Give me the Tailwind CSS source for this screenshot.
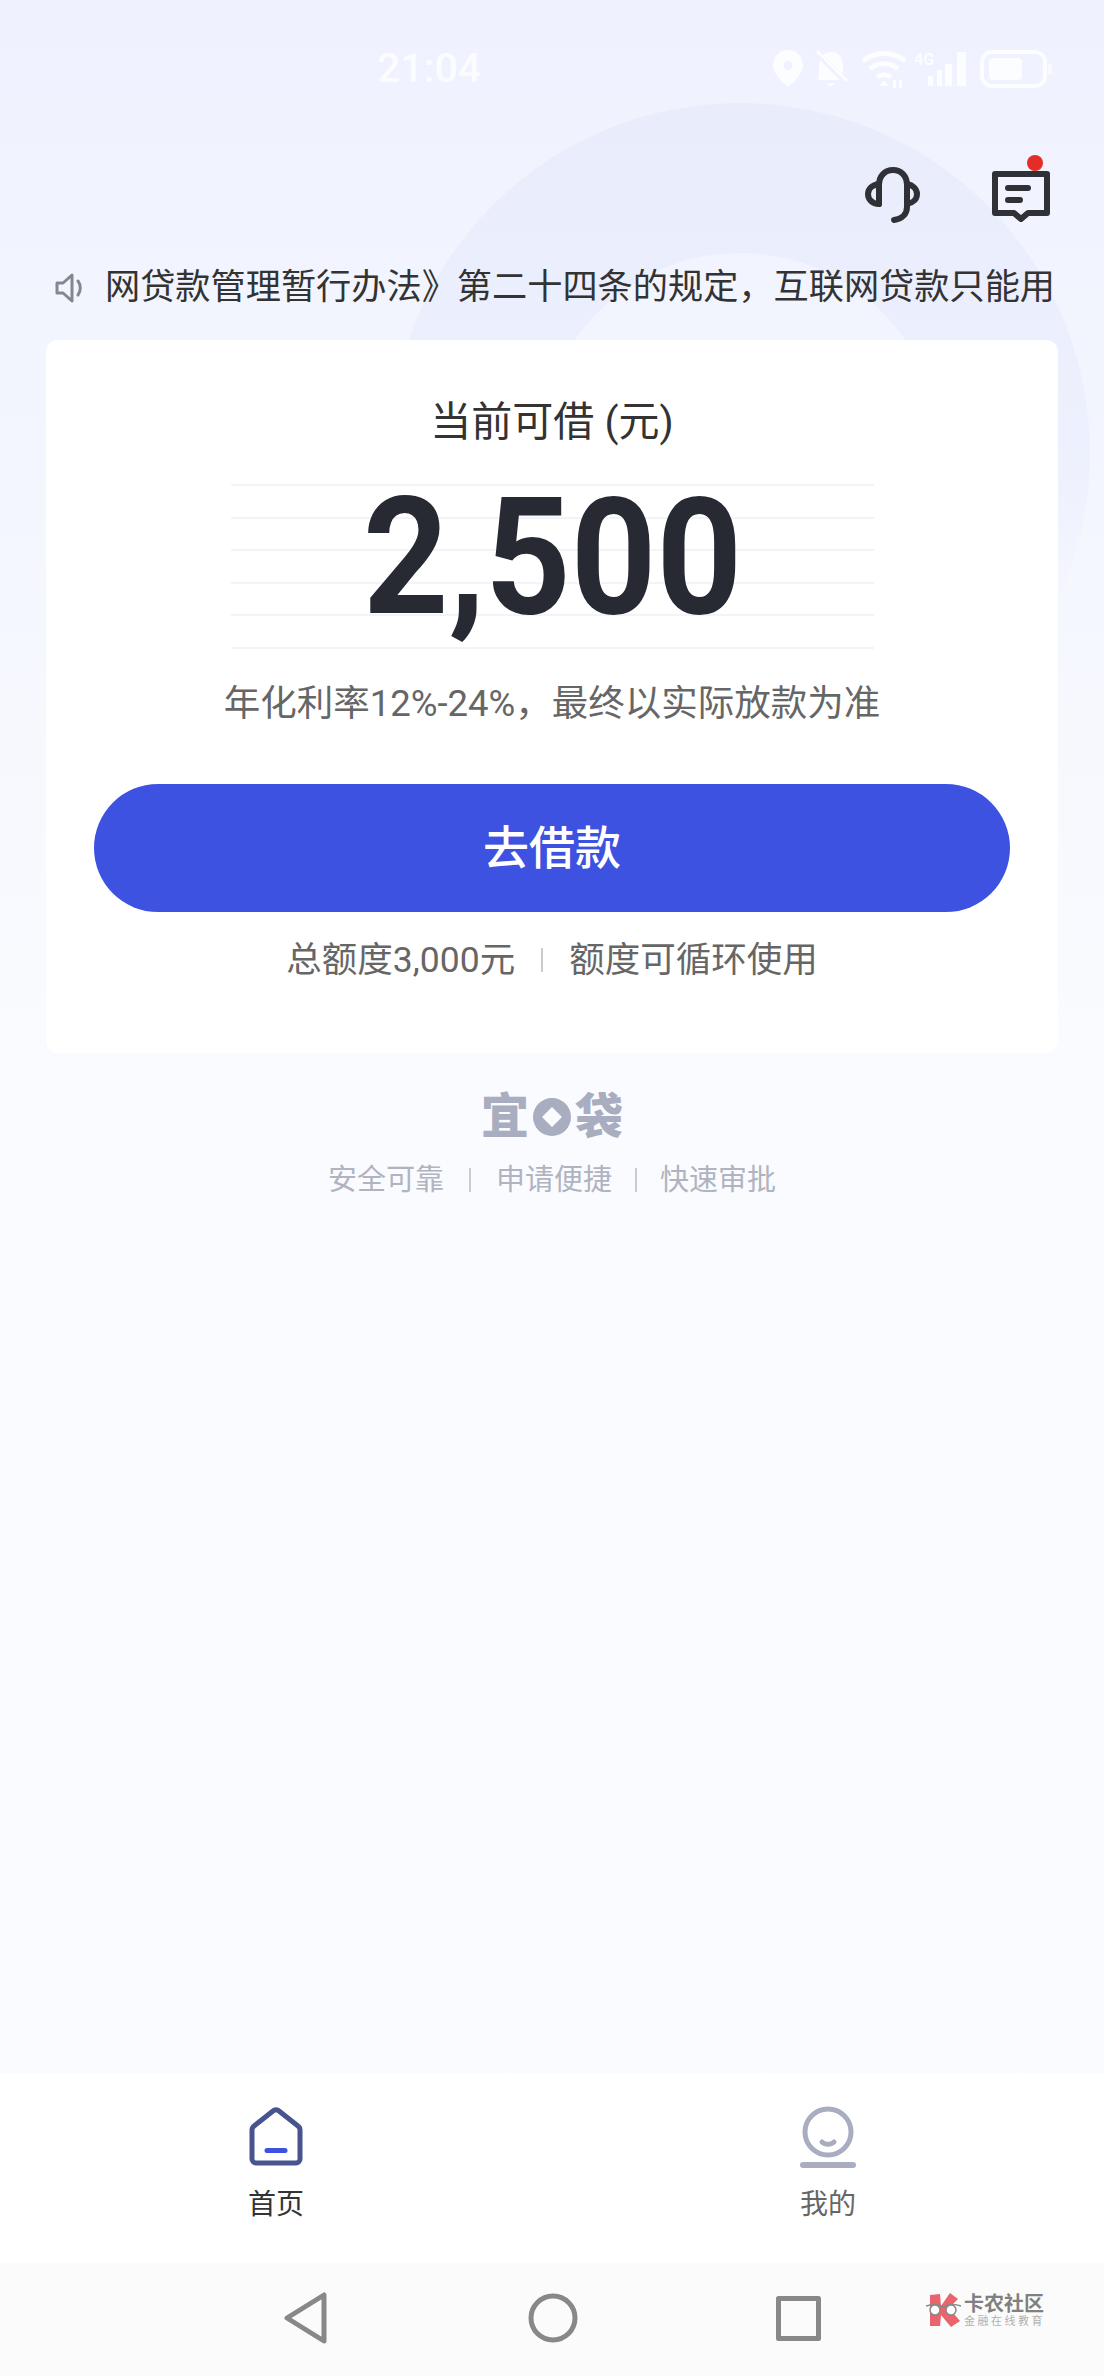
<!DOCTYPE html>
<html lang="zh-CN">
<head>
<meta charset="utf-8">
<title>首页</title>
<script src="https://cdn.jsdelivr.net/npm/@tailwindcss/browser@4"></script>
</head>
<body class="font-['Roboto','Noto_Sans_CJK_SC',sans-serif]">
<div class="relative w-[1104px] h-[2376px] overflow-hidden flex flex-col bg-gradient-to-b from-[#eff2fe] to-[#fafbff] to-[45%]">

  <!-- background ring -->
  <svg class="absolute left-[390px] top-[103px]" width="700" height="700" viewBox="0 0 700 700" fill="none">
    <defs>
      <linearGradient id="ring" x1="0" y1="0" x2="0" y2="700" gradientUnits="userSpaceOnUse">
        <stop offset="0" stop-color="#e9ecfb"/>
        <stop offset=".5" stop-color="#edf0fd"/>
        <stop offset=".78" stop-color="#f1f3fe" stop-opacity="0"/>
      </linearGradient>
    </defs>
    <circle cx="350" cy="350" r="275" stroke="url(#ring)" stroke-width="150"/>
  </svg>

  <!-- status bar -->
  <div class="relative flex items-center h-[130px] pt-[6px] pl-[377px] pr-[52px] text-white">
    <span class="text-[41px] leading-none font-medium opacity-80">21:04</span>
    <svg class="ml-auto" width="279" height="40" viewBox="0 0 279 40" fill="#ffffff" opacity=".85">
      <path fill-rule="evenodd" d="M15 2a15 15 0 0 1 15 15c0 9-9 17-15 22C9 34 0 26 0 17A15 15 0 0 1 15 2zm0 11a4.500 4.500 0 1 0 0 9 4.500 4.500 0 0 0 0-9z"/>
      <path d="M58 4c8 0 12 6 12 14v9l4 5H46l-1-1 1-4V18c0-8 4-14 12-14zM53 35h10l-5 4z"/>
      <path d="M42 3l33 33" stroke="#eff2fe" stroke-width="6"/>
      <path d="M44 3l30 30" stroke="#ffffff" stroke-width="3"/>
      <g fill="none" stroke="#ffffff" stroke-width="5">
        <path d="M90 13c12-10 30-10 42 0"/>
        <path d="M97 21c8-7 20-7 28 0"/>
        <path d="M104 29c4-3 10-3 14 0"/>
      </g>
      <path d="M111 32l5 6h-10zM120 32h3v8h-3zM126 32h3v8h-3z"/>
      <text x="141" y="17" font-size="16" font-weight="700" font-family="Roboto, sans-serif">4G</text>
      <rect x="155" y="28" width="5" height="10"/><rect x="164" y="22" width="5" height="16"/><rect x="172" y="16" width="7" height="22"/><rect x="184" y="4" width="9" height="34"/>
      <rect x="209" y="4" width="63" height="34" rx="10" fill="none" stroke="#ffffff" stroke-width="4"/>
      <rect x="216" y="10" width="33" height="22" rx="4"/>
      <rect x="275" y="15" width="4" height="12" rx="2" opacity=".7"/>
    </svg>
  </div>

  <!-- top actions -->
  <div class="relative flex justify-end items-start gap-[72px] pr-[54px] h-[128px] pt-[37px]">
    <svg width="55" height="56" viewBox="0 0 55 56" fill="none" stroke="#2f3136" stroke-width="6" stroke-linecap="round">
      <path d="M14 37V18C14 9 20 3 28 3s14 6 14 15v22c0 7-5 12-13 13"/>
      <path d="M14 17C7 18 3 22 3 27s4 10 11 10"/>
      <path d="M42 17c6 1 10 5 10 10s-4 9-10 10"/>
    </svg>
    <div class="relative w-[58px] h-[52px]">
      <svg width="58" height="52" viewBox="0 0 58 52" fill="none" stroke="#2f3136" stroke-width="6" stroke-linejoin="round" stroke-linecap="round" class="mt-[4px]">
        <path d="M3 3h52v39H36l-7 6-7-6H3z"/>
        <path d="M16 17h20M16 29h12"/>
      </svg>
      <span class="absolute left-[35px] -top-[12px] w-[16px] h-[16px] rounded-full bg-[#e52d27]"></span>
    </div>
  </div>

  <!-- notice -->
  <div class="relative flex items-center h-[38px] mt-[11px] pl-[55px]">
    <svg class="shrink-0" width="30" height="32" viewBox="0 0 30 32" fill="none" stroke="#85878c" stroke-width="3" stroke-linejoin="round">
      <path d="M2 11h6l9-8v26l-9-8H2z"/>
      <path d="M23 9c3 4 3 10 0 14" stroke-linecap="round"/>
    </svg>
    <span class="ml-[20px] text-[35.200px] leading-none whitespace-nowrap text-[#333333]">网贷款管理暂行办法》第二十四条的规定，互联网贷款只能用</span>
  </div>

  <!-- quota card -->
  <div class="relative mx-[46px] mt-[33px] h-[713px] rounded-[12px] bg-white flex flex-col items-center">
    <div class="mt-[52px] text-[41px] leading-[60px] text-[#333333]">当前可借 (元)</div>
    <div class="relative mt-[32px] w-[643px] h-[165px] flex flex-col justify-between">
      <div class="h-[2px] bg-[#f3f4f9]"></div>
      <div class="h-[2px] bg-[#f3f4f9]"></div>
      <div class="h-[2px] bg-[#f3f4f9]"></div>
      <div class="h-[2px] bg-[#f3f4f9]"></div>
      <div class="h-[2px] bg-[#f3f4f9]"></div>
      <div class="h-[2px] bg-[#f3f4f9]"></div>
      <div class="absolute inset-x-0 -top-[10px] h-[165px] flex items-center justify-center text-[164px] leading-none font-bold text-[#272933] scale-x-[0.91]"><span>2</span><span>,</span><span>500</span></div>
    </div>
    <div class="mt-[28px] text-[36.500px] leading-[54px] text-[#666666]">年化利率12%-24%，最终以实际放款为准</div>
    <button class="mt-[53px] w-[916px] h-[128px] rounded-full bg-[#3d52e0] text-white text-[46px] font-medium">去借款</button>
    <div class="mt-[23px] flex items-center text-[35.500px] leading-[50px] text-[#666666]">
      <span>总额度3,000元</span>
      <span class="mx-[26px] w-[2px] h-[24px] bg-[#cccccc]"></span>
      <span>额度可循环使用</span>
    </div>
  </div>

  <!-- brand -->
  <div class="relative flex flex-col items-center mt-[34px]">
    <div class="flex items-center text-[48px] leading-[60px] font-black text-[#a9adc0]">
      <span>宜</span>
      <svg class="mx-[4px]" width="38" height="38" viewBox="0 0 38 38"><path fill="#a9adc0" fill-rule="evenodd" d="M19 0a19 19 0 1 1 0 38 19 19 0 0 1 0-38zm0 9L9 19l10 10 10-10z"/></svg>
      <span>袋</span>
    </div>
    <div class="mt-[13px] flex items-center text-[29px] leading-[40px] text-[#b0b3c0]">
      <span>安全可靠</span>
      <span class="mx-[25px] w-[2px] h-[24px] bg-[#c9cbd5]"></span>
      <span>申请便捷</span>
      <span class="mx-[23px] w-[2px] h-[24px] bg-[#c9cbd5]"></span>
      <span>快速审批</span>
    </div>
  </div>

  <div class="flex-1"></div>

  <!-- tab bar -->
  <div class="relative grid grid-cols-2 h-[190px] bg-white">
    <div class="flex flex-col items-center pt-[34px]">
      <svg width="56" height="60" viewBox="0 0 56 60" fill="none">
        <path d="M4 23v29a4 4 0 0 0 4 4h40a4 4 0 0 0 4-4V23a5 5 0 0 0-2-4L31 4a4 4 0 0 0-6 0L6 19a5 5 0 0 0-2 4z" stroke="#47548f" stroke-width="5" stroke-linejoin="round"/>
        <path d="M19 43.500h18" stroke="#3d52e0" stroke-width="5" stroke-linecap="round"/>
      </svg>
      <span class="mt-[20px] text-[28px] leading-[36px] text-[#333333]">首页</span>
    </div>
    <div class="flex flex-col items-center pt-[34px]">
      <svg width="56" height="62" viewBox="0 0 56 62" fill="none" class="-mt-[1px]">
        <circle cx="28" cy="26" r="23" stroke="#a9adc0" stroke-width="5"/>
        <path d="M22 36c3 3 9 3 12 0" stroke="#a9adc0" stroke-width="5" stroke-linecap="round"/>
        <path d="M3 59h50" stroke="#a9adc0" stroke-width="6" stroke-linecap="round"/>
      </svg>
      <span class="mt-[19px] text-[28px] leading-[36px] text-[#666666]">我的</span>
    </div>
  </div>

  <!-- system nav -->
  <div class="relative h-[113px] bg-[#fbfbfb] flex items-center pl-[283px]">
    <svg width="46" height="52" viewBox="0 0 46 52" fill="none" stroke="#888888" stroke-width="5" stroke-linejoin="round" class="-mt-[3px]"><path d="M41 3v46L4 26z"/></svg>
    <svg class="ml-[199px] -mt-[3px]" width="50" height="50" viewBox="0 0 50 50" fill="none" stroke="#888888" stroke-width="5"><circle cx="25" cy="25" r="22"/></svg>
    <svg class="ml-[198px] -mt-[3px]" width="45" height="45" viewBox="0 0 45 45" fill="none" stroke="#888888" stroke-width="5" stroke-linejoin="round"><rect x="2.500" y="2.500" width="40" height="40"/></svg>
    <div class="ml-[105px] flex items-center mt-[-19px]">
      <svg width="36" height="36" viewBox="0 0 36 36">
        <path d="M4 3l10-1 1 12L24 1l8 6-9 9 11 13-9 6-10-12-1 11H4z" fill="#e9646d"/>
        <path d="M0 14c5-2 12-2 17 1 5-3 12-3 18-1" fill="none" stroke="#888888" stroke-width="1.500"/>
        <circle cx="9" cy="18" r="5" fill="#ffffff" stroke="#888888" stroke-width="1.500"/>
        <circle cx="25" cy="18" r="5" fill="#ffffff" stroke="#888888" stroke-width="1.500"/>
      </svg>
      <div class="ml-[2px] flex flex-col">
        <span class="text-[20px] leading-[22px] font-bold text-[#808080]">卡农社区</span>
        <span class="text-[11px] leading-[13px] tracking-[2.500px] whitespace-nowrap text-[#b0b0b0]">金融在线教育</span>
      </div>
    </div>
  </div>
</div>
</body>
</html>
